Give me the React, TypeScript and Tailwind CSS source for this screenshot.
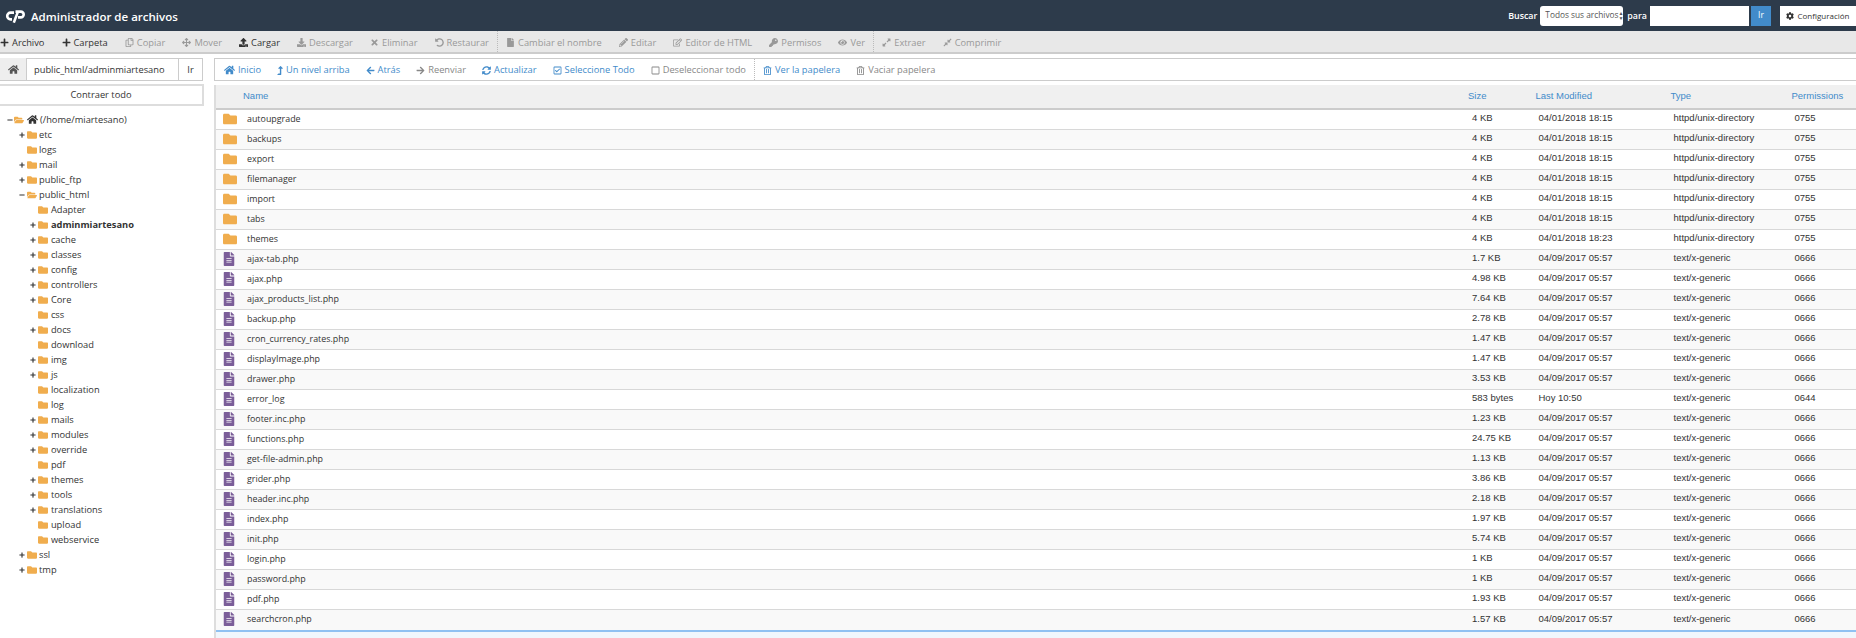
import React from "react";
import {
  FaPlus, FaRegCopy, FaArrowsAlt, FaUpload, FaDownload, FaTimes, FaUndoAlt, FaFile, FaPencilAlt, FaRegEdit, FaKey, FaEye,
  FaExpandAlt, FaCompressAlt, FaHome, FaLevelUpAlt, FaArrowLeft, FaArrowRight, FaSyncAlt, FaRegCheckSquare, FaRegSquare,
  FaRegTrashAlt, FaCog, FaFolder, FaFolderOpen, FaFileAlt, FaMinus,
} from "react-icons/fa";

const Item = ({ icon: I, label, on, iconCls = "w-[9px] h-[9px]" }: any) => (
  <span className={`flex items-center gap-[3px] whitespace-nowrap ${on ? "text-[#333]" : "text-[#999]"}`}>
    <I className={iconCls} />
    {label}
  </span>
);

const Nav = ({ icon: I, label, on = true, iconCls = "w-[9px] h-[9px]" }: any) => (
  <span className={`flex items-center gap-[3px] whitespace-nowrap ${on ? "text-[#428bca]" : "text-[#888]"}`}>
    <I className={iconCls} />
    {label}
  </span>
);

type T = [number, string, number, number?];
// depth, name, 0 none / 1 plus / 2 minus, bold
const tree: T[] = [
  [1, "etc", 1], [1, "logs", 0], [1, "mail", 1], [1, "public_ftp", 1], [1, "public_html", 2],
  [2, "Adapter", 0], [2, "adminmiartesano", 1, 1], [2, "cache", 1], [2, "classes", 1], [2, "config", 1], [2, "controllers", 1],
  [2, "Core", 1], [2, "css", 0], [2, "docs", 1], [2, "download", 0], [2, "img", 1], [2, "js", 1], [2, "localization", 0], [2, "log", 0],
  [2, "mails", 1], [2, "modules", 1], [2, "override", 1], [2, "pdf", 0], [2, "themes", 1], [2, "tools", 1], [2, "translations", 1],
  [2, "upload", 0], [2, "webservice", 0], [1, "ssl", 1], [1, "tmp", 1],
];

const dirs: [string, string][] = [
  ["autoupgrade", "18:15"], ["backups", "18:15"], ["export", "18:15"], ["filemanager", "18:15"], ["import", "18:15"], ["tabs", "18:15"], ["themes", "18:23"],
];
const files: [string, string, string?, string?][] = [
  ["ajax-tab.php", "1.7 KB"], ["ajax.php", "4.98 KB"], ["ajax_products_list.php", "7.64 KB"], ["backup.php", "2.78 KB"],
  ["cron_currency_rates.php", "1.47 KB"], ["displayImage.php", "1.47 KB"], ["drawer.php", "3.53 KB"],
  ["error_log", "583 bytes", "Hoy 10:50", "0644"], ["footer.inc.php", "1.23 KB"], ["functions.php", "24.75 KB"], ["get-file-admin.php", "1.13 KB"],
  ["grider.php", "3.86 KB"], ["header.inc.php", "2.18 KB"], ["index.php", "1.97 KB"], ["init.php", "5.74 KB"], ["login.php", "1 KB"],
  ["password.php", "1 KB"], ["pdf.php", "1.93 KB"], ["searchcron.php", "1.57 KB"],
];
const rows = [
  ...dirs.map(([n, t]) => ({ n, d: true, s: "4 KB", m: "04/01/2018 " + t, ty: "httpd/unix-directory", p: "0755" })),
  ...files.map(([n, s, m, p]) => ({ n, d: false, s, m: m ?? "04/09/2017 05:57", ty: "text/x-generic", p: p ?? "0666" })),
];
const cols = "grid grid-cols-[1248px_67.5px_135px_121px_1fr]";
const cell = "font-['Liberation_Sans',sans-serif] text-[9.5px]";

export default function App() {
  return (
    <div className="w-[1856px] h-[638px] overflow-hidden bg-white font-['Open_Sans',sans-serif] text-[9.3px] text-[#333] flex flex-col">
      <header className="h-[31px] shrink-0 bg-[#2d3b4b] flex items-center text-white">
        <svg viewBox="0 0 20 13" className="w-[20px] h-[13px] ml-[5px] mr-[6px] mt-[2px]" fill="none" stroke="#fff" strokeWidth="2.6">
          <path d="M9 2.6H5.6a3.4 3.4 0 0 0 0 6.8H7" />
          <path d="M10.5 1.6H15.8a2.9 2.9 0 0 1 0 5.8H13" />
          <path d="M13 1.6L8.8 12.6" />
        </svg>
        <span className="text-[11.5px] font-semibold mt-[2px]">Administrador de archivos</span>
        <div className="ml-auto flex items-center h-full">
          <span className="font-semibold text-[8.9px]">Buscar</span>
          <div className="ml-[3px] w-[83px] h-[20px] bg-white rounded-[3px] text-[#555] text-[8.3px] whitespace-nowrap flex items-center pl-[5px] justify-between pr-[1px]">
            Todos sus archivos
            <span className="text-[5px] leading-[5px] flex flex-col"><span>▲</span><span>▼</span></span>
          </div>
          <span className="ml-[4px] font-semibold text-[8.9px]">para</span>
          <div className="ml-[3px] w-[99px] h-[20px] bg-white" />
          <button className="ml-[2px] w-[20px] h-[20px] bg-[#428bca] text-[8.5px] text-white">Ir</button>
          <button className="ml-[9px] w-[76px] h-[20px] bg-white text-[#333] text-[8px] flex items-center justify-center gap-[3px] whitespace-nowrap">
            <FaCog className="w-[8px] h-[8px]" />Configuración
          </button>
        </div>
      </header>

      <div className="h-[23px] shrink-0 bg-[#e8e8e8] border-b-2 border-[#ccc] flex items-center gap-[17.1px] pt-[2px]">
        <Item icon={FaPlus} label="Archivo" on />
        <Item icon={FaPlus} label="Carpeta" on />
        <Item icon={FaRegCopy} label="Copiar" />
        <Item icon={FaArrowsAlt} label="Mover" />
        <Item icon={FaUpload} label="Cargar" on />
        <Item icon={FaDownload} label="Descargar" />
        <Item icon={FaTimes} label="Eliminar" />
        <Item icon={FaUndoAlt} label="Restaurar" />
        <div className="self-stretch border-l border-dotted border-[#bbb] -mx-[9px] -mt-[2px]" />
        <Item icon={FaFile} label="Cambiar el nombre" />
        <Item icon={FaPencilAlt} label="Editar" />
        <Item icon={FaRegEdit} label="Editor de HTML" />
        <Item icon={FaKey} label="Permisos" />
        <Item icon={FaEye} label="Ver" />
        <div className="self-stretch border-l border-dotted border-[#bbb] -mx-[9px] -mt-[2px]" />
        <Item icon={FaExpandAlt} label="Extraer" />
        <Item icon={FaCompressAlt} label="Comprimir" />
      </div>

      <div className="flex-1 flex pt-[4px] min-h-0">
        <aside className="w-[214px] shrink-0 flex flex-col">
          <div className="w-[203px] h-[23px] flex items-stretch">
            <div className="w-[26px] bg-[#eee] border-b border-[#ccc] flex items-center justify-center text-[#555]"><FaHome className="w-[11px] h-[11px]" /></div>
            <div className="flex-1 border border-[#ccc] flex items-center pl-[7px]">public_html/adminmiartesano</div>
            <div className="w-[24px] border border-l-0 border-[#ccc] flex items-center justify-center">Ir</div>
          </div>
          <button className="mt-[3px] w-[204px] h-[22px] border-2 border-[#ddd] border-l-0">Contraer todo</button>
          <div className="mt-[6px] pl-[7px]">
            <div className="h-[15px] flex items-center">
              <FaMinus className="w-[6px] h-[6px] mr-[1px]" />
              <FaFolderOpen className="w-[10px] h-[10px] text-[#f0ad4e] mr-[3px]" />
              <FaHome className="w-[11px] h-[11px] mr-[2px]" />
              (/home/miartesano)
            </div>
            {tree.map(([d, n, k, b]) => (
              <div key={n} className={`h-[15px] flex items-center ${d === 1 ? "pl-[11.5px]" : "pl-[23.4px]"} ${b ? "font-bold" : ""}`}>
                <span className="w-[8px] shrink-0">
                  {k === 1 && <FaPlus className="w-[6px] h-[6px]" />}
                  {k === 2 && <FaMinus className="w-[6px] h-[6px]" />}
                </span>
                {k === 2 ? <FaFolderOpen className="w-[10px] h-[10px] text-[#f0ad4e] mr-[2.5px]" /> : <FaFolder className="w-[10px] h-[10px] text-[#f0ad4e] mr-[2.5px]" />}
                {n}
              </div>
            ))}
          </div>
        </aside>

        <main className="flex-1 min-w-0">
          <div className="h-[23px] border-y border-[#ccc] border-l flex items-center pl-[9px] gap-[16px] pt-[1px]">
            <Nav icon={FaHome} label="Inicio" iconCls="w-[11px] h-[10px]" />
            <Nav icon={FaLevelUpAlt} label="Un nivel arriba" iconCls="w-[6px] h-[9px]" />
            <Nav icon={FaArrowLeft} label="Atrás" />
            <Nav icon={FaArrowRight} label="Reenviar" on={false} />
            <Nav icon={FaSyncAlt} label="Actualizar" />
            <Nav icon={FaRegCheckSquare} label="Seleccione Todo" />
            <Nav icon={FaRegSquare} label="Deseleccionar todo" on={false} />
            <div className="self-stretch border-l border-dotted border-[#bbb] -mx-[8px] -mt-[1px]" />
            <Nav icon={FaRegTrashAlt} label="Ver la papelera" />
            <Nav icon={FaRegTrashAlt} label="Vaciar papelera" on={false} />
          </div>
          <div className="mt-[4px] border-l-2 border-[#ddd] h-full">
            <div className={`${cols} h-[25px] bg-[#f0f0f0] border-b-2 border-[#ccc] items-center text-[#428bca] ${cell}`}>
              <span className="pl-[27px]">Name</span>
              <span className="pl-[4px]">Size</span>
              <span className="pl-[4px]">Last Modified</span>
              <span className="pl-[4px]">Type</span>
              <span className="pl-[4px]">Permissions</span>
            </div>
            {rows.map((r, i) => (
              <div key={r.n + i} className={`${cols} items-center pb-[2px] ${i === rows.length - 1 ? "h-[22px] border-b-2 border-[#8fc1f2]" : "h-[20px] border-b border-[#d8d8d8]"} ${i % 2 ? "bg-[#f9f9f9]" : "bg-white"}`}>
                <span className="flex items-center pl-[7px]">
                  {r.d ? <FaFolder className="w-[14px] h-[14px] text-[#f0ad4e]" /> : <FaFileAlt className="w-[12px] h-[14px] text-[#7b5e99] mr-[2px]" />}
                  <span className="ml-[10px] text-[8.9px]">{r.n}</span>
                </span>
                <span className={`pl-[8px] ${cell}`}>{r.s}</span>
                <span className={`pl-[7px] ${cell}`}>{r.m}</span>
                <span className={`pl-[7px] ${cell}`}>{r.ty}</span>
                <span className={`pl-[7px] ${cell}`}>{r.p}</span>
              </div>
            ))}
            <div className="h-[6px] bg-[#f0f7fd]" />
          </div>
        </main>
      </div>
    </div>
  );
}
